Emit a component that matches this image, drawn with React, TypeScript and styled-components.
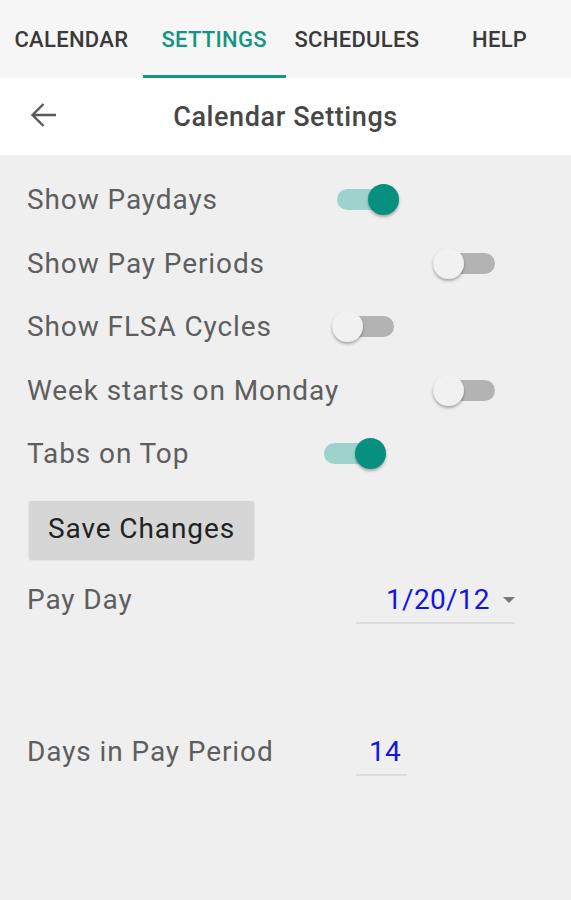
import styled, { createGlobalStyle } from 'styled-components';

const GlobalStyle = createGlobalStyle`
  html, body {
    margin: 0;
    padding: 0;
    background: #efefef;
    font-family: Roboto, "Liberation Sans", sans-serif;
  }
`;

const Page = styled.div`
  width: 571px;
  height: 900px;
  background: #efefef;
  display: flex;
  flex-direction: column;
`;

const TabBar = styled.div`
  display: grid;
  grid-template-columns: repeat(4, 1fr);
  height: 78px;
  background: #f6f6f6;
`;

const Tab = styled.div<{ $active?: boolean }>`
  display: flex;
  align-items: center;
  justify-content: center;
  padding-top: 3px;
  font-size: 22px;
  font-weight: 500;
  letter-spacing: 0.3px;
  color: ${p => (p.$active ? '#129683' : '#3a3a3a')};
  border-bottom: 3px solid ${p => (p.$active ? '#129683' : 'transparent')};
  box-sizing: border-box;
`;

const Header = styled.div`
  height: 77px;
  background: #ffffff;
  display: flex;
  align-items: center;
`;

const BackButton = styled.div`
  width: 86px;
  display: flex;
  justify-content: center;
  padding-bottom: 4px;
`;

const Title = styled.div`
  flex: 1;
  text-align: center;
  padding-right: 86px;
  font-size: 27px;
  font-weight: 500;
  letter-spacing: 0.6px;
  color: #474747;
`;

const Body = styled.div`
  display: flex;
  flex-direction: column;
  padding: 13px 0 0 27px;
`;

const Row = styled.div<{ $col: number }>`
  display: grid;
  grid-template-columns: ${p => p.$col}px auto;
  align-items: center;
  height: 63.5px;
`;

const Label = styled.div`
  font-size: 28px;
  letter-spacing: 0.9px;
  color: #5e5e5e;
  white-space: nowrap;
`;

const Track = styled.div<{ $on: boolean }>`
  width: 62px;
  height: 21px;
  border-radius: 11px;
  background: ${p => (p.$on ? '#9dd3cc' : '#b3b3b3')};
  display: flex;
  align-items: center;
  justify-content: ${p => (p.$on ? 'flex-end' : 'flex-start')};
`;

const Thumb = styled.div<{ $on: boolean }>`
  width: 31px;
  height: 31px;
  border-radius: 50%;
  background: ${p => (p.$on ? '#07907f' : '#f1f1f1')};
  box-shadow: 0 2px 3px rgba(0, 0, 0, 0.3);
`;

const SaveButton = styled.button`
  margin: 15px 0 0 2px;
  width: 225px;
  height: 58px;
  border: none;
  border-radius: 2px;
  background: #d6d6d6;
  box-shadow: 0 1px 2px rgba(0, 0, 0, 0.15);
  font-family: Roboto, "Liberation Sans", sans-serif;
  font-size: 28px;
  letter-spacing: 0.9px;
  color: #222222;
  padding: 0 0 2px;
`;

const FieldRow = styled.div<{ $top: number }>`
  display: grid;
  grid-template-columns: 329px auto;
  align-items: center;
  margin-top: ${p => p.$top}px;
  height: 50px;
`;

const Field = styled.div<{ $w: number; $indent: number }>`
  width: ${p => p.$w}px;
  height: 48px;
  box-sizing: border-box;
  border-bottom: 2px solid #dcdcdc;
  display: flex;
  align-items: center;
  padding-left: ${p => p.$indent}px;
  padding-top: 2px;
  font-size: 28px;
  letter-spacing: 0.3px;
  color: #1414e6;
`;

const Caret = styled.span`
  width: 0;
  height: 0;
  margin-left: 13px;
  border-left: 6px solid transparent;
  border-right: 6px solid transparent;
  border-top: 6px solid #777777;
`;

const Toggle = ({ on }: { on: boolean }) => (
  <Track $on={on}>
    <Thumb $on={on} />
  </Track>
);

const settings = [
  { label: 'Show Paydays', on: true, col: 310 },
  { label: 'Show Pay Periods', on: false, col: 406 },
  { label: 'Show FLSA Cycles', on: false, col: 305 },
  { label: 'Week starts on Monday', on: false, col: 406 },
  { label: 'Tabs on Top', on: true, col: 297 },
];

const App = () => {
  return (
    <>
      <GlobalStyle />
      <Page>
        <TabBar>
          <Tab>CALENDAR</Tab>
          <Tab $active>SETTINGS</Tab>
          <Tab>SCHEDULES</Tab>
          <Tab>HELP</Tab>
        </TabBar>
        <Header>
          <BackButton>
            <svg width="28" height="28" viewBox="0 0 28 28">
              <path
                d="M27 14H3.5M14.5 3L3.5 14L14.5 25"
                fill="none"
                stroke="#5a5a5a"
                strokeWidth="2.4"
              />
            </svg>
          </BackButton>
          <Title>Calendar Settings</Title>
        </Header>
        <Body>
          {settings.map(s => (
            <Row key={s.label} $col={s.col}>
              <Label>{s.label}</Label>
              <Toggle on={s.on} />
            </Row>
          ))}
          <div>
            <SaveButton>Save Changes</SaveButton>
          </div>
          <FieldRow $top={16}>
            <Label>Pay Day</Label>
            <Field $w={159} $indent={30}>
              1/20/12
              <Caret />
            </Field>
          </FieldRow>
          <FieldRow $top={102}>
            <Label>Days in Pay Period</Label>
            <Field $w={51} $indent={13}>14</Field>
          </FieldRow>
        </Body>
      </Page>
    </>
  );
};

export default App;
